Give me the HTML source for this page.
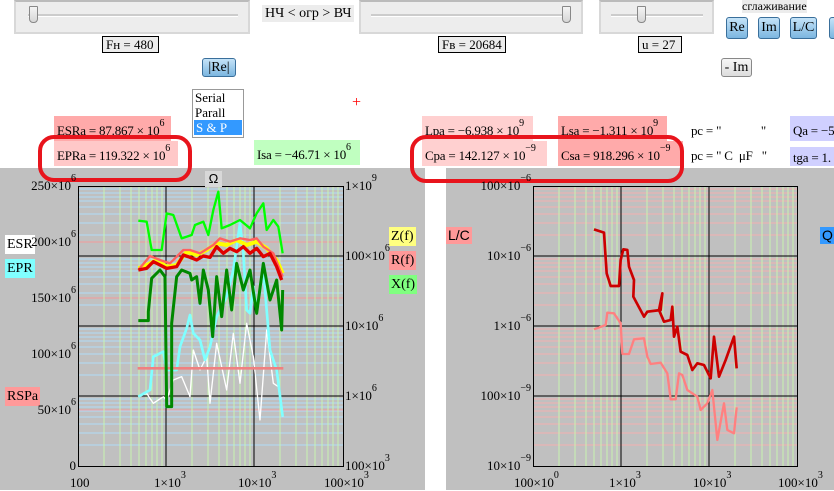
<!DOCTYPE html>
<html><head><meta charset="utf-8"><style>
body{margin:0;width:834px;height:490px;overflow:hidden;background:#fff;position:relative;font-family:"Liberation Serif",serif;font-size:13px;color:#000}
div{white-space:nowrap}
.a{position:absolute}
.sl{position:absolute;background:#ededed;border:2px solid #d8d8d8;border-top-color:#bbb;box-sizing:border-box}
.tr{position:absolute;height:2px;background:#ccc;top:12px;border-bottom:1px solid #fff}
.th{position:absolute;top:4px;width:9px;height:17px;background:linear-gradient(#f4f4f4,#d6d6d6);border:1px solid #888;border-radius:1px 1px 4px 4px;box-sizing:border-box}
.bx{position:absolute;border:1px solid #000;background:#ececec;padding:0 3px;line-height:16px;height:17px;box-sizing:border-box;font-size:13px}
.bt{position:absolute;background:linear-gradient(#c5e3f8,#7cb6e0);border:1px solid #3a6f9b;border-radius:3px;text-align:center;line-height:19px;font-size:14px;box-sizing:border-box}
.v{position:absolute;padding:0 3px;line-height:30px;height:25px;font-size:13px;letter-spacing:-0.2px;box-sizing:border-box}
sup{font-size:10px;vertical-align:9px;line-height:0;letter-spacing:0}
.lg{position:absolute;font-size:14px;line-height:19px;padding:0 2px}
.ax{position:absolute;font-size:13px}
</style></head><body>
<div class="sl" style="left:14px;top:0;width:236px;height:34px"><div class="tr" style="left:12px;width:210px"></div><div class="th" style="left:13px"></div></div>
<div class="a" style="left:262px;top:5px;background:#ececec;padding:0 3px;line-height:17px;font-size:14px">НЧ &lt; огр &gt; ВЧ</div>
<div class="sl" style="left:359px;top:0;width:224px;height:34px"><div class="tr" style="left:10px;width:200px"></div><div class="th" style="left:201px"></div></div>
<div class="sl" style="left:599px;top:0;width:115px;height:34px"><div class="tr" style="left:10px;width:92px"></div><div class="th" style="left:36px"></div></div>
<div class="a" style="left:742px;top:0;background:#ececec;line-height:13px;font-size:12px">сглаживание</div>
<div class="bt" style="left:726px;top:17px;width:22px;height:22px">Re</div>
<div class="bt" style="left:758px;top:17px;width:22px;height:22px">Im</div>
<div class="bt" style="left:790px;top:17px;width:27px;height:22px">L/C</div>
<div class="bt" style="left:829px;top:17px;width:10px;height:22px"></div>
<div class="bx" style="left:102px;top:36px;width:57px">Fн = 480</div>
<div class="bx" style="left:438px;top:36px;width:68px">Fв = 20684</div>
<div class="bx" style="left:638px;top:36px;width:44px">u = 27</div>
<div class="bt" style="left:202px;top:58px;width:34px;height:19px;line-height:17px">|Re|</div>
<div class="bt" style="left:721px;top:58px;width:31px;height:19px;line-height:17px;background:linear-gradient(#f6f6f6,#ddd);border-color:#888">- Im</div>
<div class="a" style="left:192px;top:89px;width:52px;height:49px;border:1px solid #999;box-sizing:border-box;line-height:15px;font-size:13px"><div style="padding-left:2px">Serial</div><div style="padding-left:2px">Parall</div><div style="padding-left:2px;background:#3399ff;color:#fff;margin:0 1px">S &amp; P</div></div>
<div class="a" style="left:352px;top:94px;color:red;font-size:16px">+</div>
<div class="v" style="left:54px;top:116px;width:117px;background:#ffaaaa">ESRa = 87.867 × 10<sup>6</sup></div>
<div class="v" style="left:54px;top:141px;width:124px;background:#ffc8c8">EPRa = 119.322 × 10<sup>6</sup></div>
<div class="v" style="left:254px;top:140px;width:106px;background:#c0ffc0">Isa = −46.71 × 10<sup>6</sup></div>
<div class="v" style="left:422px;top:116px;width:111px;background:#ffd0d0">Lpa = −6.938 × 10<sup>9</sup></div>
<div class="v" style="left:558px;top:116px;width:109px;background:#ffaaaa">Lsa = −1.311 × 10<sup>9</sup></div>
<div class="v" style="left:422px;top:141px;width:125px;background:#ffd0d0">Cpa = 142.127 × 10<sup>−9</sup></div>
<div class="v" style="left:558px;top:141px;width:125px;background:#ffaaaa">Csa = 918.296 × 10<sup>−9</sup></div>
<div class="v" style="left:688px;top:116px">pc = "&nbsp;&nbsp;&nbsp;&nbsp;&nbsp;&nbsp;&nbsp;&nbsp;&nbsp;&nbsp;&nbsp;&nbsp; "</div>
<div class="v" style="left:688px;top:141px">pc = " C &nbsp;μF &nbsp; "</div>
<div class="v" style="left:790px;top:116px;width:50px;background:#d0d0ff">Qa = −5</div>
<div class="v" style="left:790px;top:147px;width:50px;height:19px;line-height:22px;background:#d0d0ff">tga = 1.</div>
<div class="a" style="left:0;top:168px;width:425px;height:322px;background:#c0c0c0"></div>
<div class="a" style="left:446px;top:168px;width:388px;height:322px;background:#c0c0c0"></div>
<svg class="a" style="left:0;top:0" width="834" height="490">
<rect x="40" y="137" width="150" height="43" rx="14" fill="none" stroke="#e8141c" stroke-width="4"/>
<rect x="412" y="137" width="270" height="44" rx="14" fill="none" stroke="#e8141c" stroke-width="4"/>
<g fill="none" stroke-width="1">
<path stroke="#b0ddf8" d="M78 445H343M78 433H343M78 424H343M78 417H343M78 411H343M78 407H343M78 403H343M78 399H343M78 375H343M78 363H343M78 354H343M78 347H343M78 341H343M78 337H343M78 333H343M78 329H343M78 305H343M78 293H343M78 284H343M78 277H343M78 271H343M78 267H343M78 263H343M78 259H343M78 235H343M78 223H343M78 214H343M78 207H343M78 201H343M78 197H343M78 193H343M78 189H343"/>
<path stroke="#f49a9a" d="M78 242H343M78 298H343M78 410H343"/>
<path stroke="#c8f5b0" d="M104 186V466M120 186V466M131 186V466M139 186V466M146 186V466M152 186V466M157 186V466M162 186V466M192 186V466M208 186V466M219 186V466M227 186V466M234 186V466M240 186V466M245 186V466M250 186V466M280 186V466M296 186V466M307 186V466M315 186V466M322 186V466M328 186V466M333 186V466M338 186V466"/>
<path stroke="#000" d="M166 186V466M254 186V466M78 256H343M78 326H343M78 396H343"/>
<rect x="78.5" y="186.5" width="265" height="280" stroke="#000"/>
<path stroke="#f4b0b0" d="M533 445H797M533 433H797M533 424H797M533 417H797M533 411H797M533 407H797M533 403H797M533 399H797M533 375H797M533 363H797M533 354H797M533 347H797M533 341H797M533 337H797M533 333H797M533 329H797M533 305H797M533 293H797M533 284H797M533 277H797M533 271H797M533 267H797M533 263H797M533 259H797M533 235H797M533 223H797M533 214H797M533 207H797M533 201H797M533 197H797M533 193H797M533 189H797"/>
<path stroke="#c8f5b0" d="M559 186V466M575 186V466M586 186V466M594 186V466M601 186V466M607 186V466M612 186V466M617 186V466M647 186V466M663 186V466M674 186V466M682 186V466M689 186V466M695 186V466M700 186V466M705 186V466M735 186V466M751 186V466M762 186V466M770 186V466M777 186V466M783 186V466M788 186V466M793 186V466"/>
<path stroke="#000" d="M621 186V466M709 186V466M533 256H797M533 326H797M533 396H797"/>
<rect x="533.5" y="186.5" width="264" height="280" stroke="#000"/>
</g>
<g transform="translate(0,170) scale(0.33333)" fill="none" stroke-linejoin="round">
<polyline stroke="#fff" stroke-width="4" points="415,680 440,670 460,700 490,680 500,690 520,630 545,620 570,680 580,540 600,600 620,560 630,700 650,520 680,660 700,490 720,640 740,460 760,560 780,750 800,480 820,640 835,650 848,740"/>
<polyline stroke="#80ffff" stroke-width="8" points="415,680 450,660 460,560 490,545 500,600 530,600 540,530 560,475 570,435 580,490 600,510 615,570 630,530 650,440 680,380 700,300 720,160 730,250 740,420 750,430 760,350 770,420 790,300 810,540 830,600 848,740"/>
<polyline stroke="#f08080" stroke-width="8" points="413,595 850,595"/>
<polyline stroke="#00ff00" stroke-width="7" points="415,152 440,155 455,240 485,240 500,130 520,135 545,205 575,195 585,165 610,155 625,195 640,120 655,65 665,175 690,165 720,150 750,175 770,130 790,100 800,180 820,150 835,170 848,250"/>
<polyline stroke="#ffff00" stroke-width="12" points="415,295 440,285 470,270 500,290 530,285 560,245 590,255 620,240 650,220 680,225 710,210 740,225 770,215 800,235 830,270 848,310"/>
<polyline stroke="#ff6060" stroke-width="7" points="415,300 450,258 480,270 510,280 550,240 570,240 600,250 640,225 660,205 690,215 720,205 750,210 770,205 790,230 820,250 848,320"/>
<polyline stroke="#008800" stroke-width="9" points="415,452 445,452 445,425 455,325 480,300 495,320 500,710 515,710 515,460 530,320 545,300 570,310 575,330 590,320 600,400 610,300 625,360 638,500 650,320 665,440 680,300 695,420 710,280 730,360 750,300 770,430 790,280 810,390 830,330 845,480 848,360"/>
<polyline stroke="#e00000" stroke-width="10" points="415,300 440,295 460,275 480,285 500,295 530,290 550,255 570,262 590,270 610,258 630,262 650,230 670,250 690,235 710,245 730,230 750,250 770,235 790,260 810,250 830,290 845,330"/>
</g>
<g transform="translate(414,170) scale(0.33333)" fill="none" stroke-linejoin="round">
<polyline stroke="#ff8080" stroke-width="7" points="540,478 575,465 580,428 600,430 620,460 625,552 645,552 660,508 690,505 700,560 710,582 740,578 760,610 770,688 785,688 795,610 805,615 820,660 850,680 860,720 880,700 895,660 910,810 930,700 940,780 960,790 968,712"/>
<polyline stroke="#cc0000" stroke-width="8" points="540,178 570,188 578,310 590,348 615,348 620,270 628,238 640,240 645,290 660,330 658,380 690,440 700,425 740,420 745,370 735,420 750,455 770,450 775,410 780,500 790,470 800,545 820,555 835,600 850,580 870,585 890,625 900,500 915,620 935,570 960,500 968,595"/>
</g>
</svg>
<div class="a" style="left:205px;top:171px;width:17px;height:16px;background:#d8d8d8;text-align:center;font-family:'Liberation Sans',sans-serif;font-size:13px;line-height:16px">Ω</div>
<div class="lg" style="left:5px;top:235px;background:#fff">ESR</div>
<div class="lg" style="left:5px;top:259px;background:#80ffff">EPR</div>
<div class="lg" style="left:5px;top:387px;background:#ff9999">RSPa</div>
<div class="lg" style="left:389px;top:227px;background:#ffff80">Z(f)</div>
<div class="lg" style="left:389px;top:251px;background:#ff9999">R(f)</div>
<div class="lg" style="left:389px;top:275px;background:#80ff80">X(f)</div>
<div class="lg" style="left:446px;top:227px;background:#ff9999;font-family:'Liberation Sans',sans-serif;line-height:17px">L/C</div>
<div class="lg" style="left:820px;top:227px;background:#3399ff;font-family:'Liberation Sans',sans-serif;line-height:17px">Q</div>
<div class="ax" style="right:758px;top:178px">250×10<sup>6</sup></div>
<div class="ax" style="right:758px;top:234px">200×10<sup>6</sup></div>
<div class="ax" style="right:758px;top:290px">150×10<sup>6</sup></div>
<div class="ax" style="right:758px;top:346px">100×10<sup>6</sup></div>
<div class="ax" style="right:758px;top:402px">50×10<sup>6</sup></div>
<div class="ax" style="right:758px;top:458px">0</div>
<div class="ax" style="left:345px;top:178px">1×10<sup>9</sup></div>
<div class="ax" style="left:345px;top:248px">100×10<sup>6</sup></div>
<div class="ax" style="left:345px;top:318px">10×10<sup>6</sup></div>
<div class="ax" style="left:345px;top:388px">1×10<sup>6</sup></div>
<div class="ax" style="left:345px;top:458px">100×10<sup>3</sup></div>
<div class="ax" style="left:70px;top:475px">100</div>
<div class="ax" style="left:154px;top:475px">1×10<sup>3</sup></div>
<div class="ax" style="left:238px;top:475px">10×10<sup>3</sup></div>
<div class="ax" style="left:324px;top:475px">100×10<sup>3</sup></div>
<div class="ax" style="right:303px;top:178px">100×10<sup>−6</sup></div>
<div class="ax" style="right:303px;top:248px">10×10<sup>−6</sup></div>
<div class="ax" style="right:303px;top:318px">1×10<sup>−6</sup></div>
<div class="ax" style="right:303px;top:388px">100×10<sup>−9</sup></div>
<div class="ax" style="right:303px;top:458px">10×10<sup>−9</sup></div>
<div class="ax" style="left:514px;top:475px">100×10<sup>0</sup></div>
<div class="ax" style="left:609px;top:475px">1×10<sup>3</sup></div>
<div class="ax" style="left:693px;top:475px">10×10<sup>3</sup></div>
<div class="ax" style="left:778px;top:475px">100×10<sup>3</sup></div>
</body></html>
